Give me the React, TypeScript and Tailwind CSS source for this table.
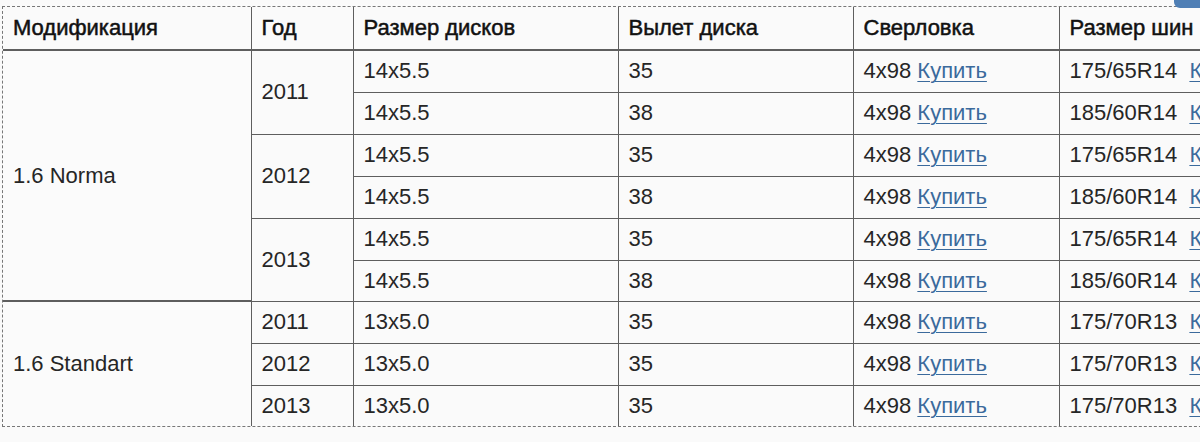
const rows = [
  { mod: '1.6 Norma', modSpan: 6, year: '2011', yearSpan: 2, disk: '14x5.5', et: '35', pcd: '4x98', tire: '175/65R14' },
  { disk: '14x5.5', et: '38', pcd: '4x98', tire: '185/60R14' },
  { year: '2012', yearSpan: 2, disk: '14x5.5', et: '35', pcd: '4x98', tire: '175/65R14' },
  { disk: '14x5.5', et: '38', pcd: '4x98', tire: '185/60R14' },
  { year: '2013', yearSpan: 2, disk: '14x5.5', et: '35', pcd: '4x98', tire: '175/65R14' },
  { disk: '14x5.5', et: '38', pcd: '4x98', tire: '185/60R14' },
  { mod: '1.6 Standart', modSpan: 3, year: '2011', yearSpan: 1, disk: '13x5.0', et: '35', pcd: '4x98', tire: '175/70R13' },
  { year: '2012', yearSpan: 1, disk: '13x5.0', et: '35', pcd: '4x98', tire: '175/70R13' },
  { year: '2013', yearSpan: 1, disk: '13x5.0', et: '35', pcd: '4x98', tire: '175/70R13' },
]

const headers = ['Модификация', 'Год', 'Размер дисков', 'Вылет диска', 'Сверловка', 'Размер шин']

const cell = 'border border-[#5e5e5e] px-[10px] align-middle'

function Buy() {
  return <a className="text-[#3b6a9c] underline decoration-1 underline-offset-[3px]">Купить</a>
}

export default function App() {
  const last = rows.length - 1
  return (
    <div
      className="relative h-[442px] w-[1200px] overflow-hidden bg-[#fafafa] text-[22px] leading-none text-[#262626]"
      style={{ fontFamily: '"Liberation Sans", Arial, sans-serif' }}
    >
      <div className="absolute right-[-10px] top-[-14px] h-[22px] w-[36px] rounded-[6px] bg-[#4f7fb5]" />
      <div className="ml-[2px] mt-[6px] w-[1240px] border-y border-l border-dashed border-[#777]">
        <table className="w-[1240px] table-fixed border-collapse">
          <colgroup>
            <col className="w-[248px]" />
            <col className="w-[102px]" />
            <col className="w-[265px]" />
            <col className="w-[235px]" />
            <col className="w-[206px]" />
            <col className="w-[184px]" />
          </colgroup>
          <thead>
            <tr className="h-[43px]">
              {headers.map((h, i) => (
                <th
                  key={h}
                  className={`${cell} border-t-0 border-b-2 text-left font-normal text-[#111] [-webkit-text-stroke:0.5px_#111] ${i === 0 ? 'border-l-0' : ''}`}
                >
                  {h}
                </th>
              ))}
            </tr>
          </thead>
          <tbody>
            {rows.map((r, i) => {
              const b = i === last ? 'border-b-0' : ''
              return (
                <tr key={i} className={i === 5 || i === 8 ? 'h-[41px]' : 'h-[42px]'}>
                  {r.mod && (
                    <td
                      rowSpan={r.modSpan}
                      className={`${cell} border-l-0 ${i + (r.modSpan ?? 1) - 1 === last ? 'border-b-0' : 'border-b-2'} bg-[#fbfbfb]`}
                    >
                      {r.mod}
                    </td>
                  )}
                  {r.year && (
                    <td rowSpan={r.yearSpan} className={`${cell} ${b}`}>
                      {r.year}
                    </td>
                  )}
                  <td className={`${cell} ${b}`}>{r.disk}</td>
                  <td className={`${cell} ${b}`}>{r.et}</td>
                  <td className={`${cell} ${b}`}>
                    {r.pcd} <Buy />
                  </td>
                  <td className={`${cell} ${b} whitespace-nowrap`}>
                    {r.tire}&nbsp; <Buy />
                  </td>
                </tr>
              )
            })}
          </tbody>
        </table>
      </div>
    </div>
  )
}
